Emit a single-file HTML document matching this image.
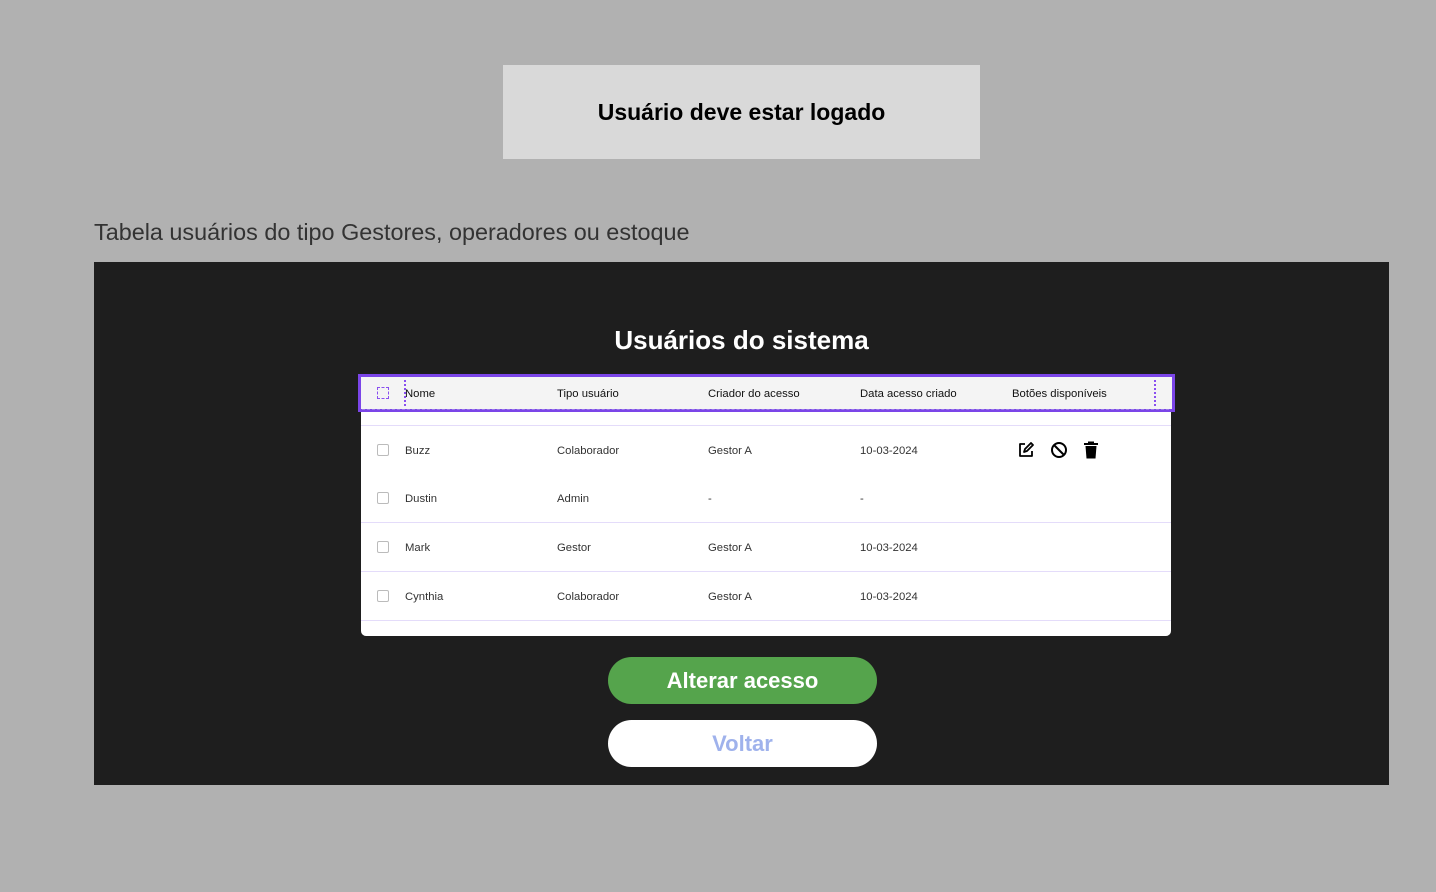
<!DOCTYPE html>
<html><head><meta charset="utf-8"><style>
body{margin:0;width:1436px;height:892px;background:#b1b1b1;position:relative;overflow:hidden;font-family:"Liberation Sans",sans-serif}
.abs{position:absolute}
.t{font-size:11.3px;color:#333;position:absolute;line-height:14px}
.h{font-size:11.3px;color:#111;position:absolute;line-height:14px}
.cb{position:absolute;left:377px;width:10px;height:10px;border:1px solid #bbb;border-radius:2px;background:#fff}
.sep{position:absolute;left:361px;width:810px;height:1px;background:#e4dcfa}
</style></head><body>
<div class="abs" style="left:503px;top:65px;width:477px;height:94px;background:#d9d9d9;display:flex;align-items:center;justify-content:center;font-weight:bold;font-size:23px;color:#000">Usuário deve estar logado</div>
<div class="abs" style="left:94px;top:219px;font-size:23.4px;color:#333">Tabela usuários do tipo Gestores, operadores ou estoque</div>
<div class="abs" style="left:94px;top:262px;width:1295px;height:523px;background:#1e1e1e"></div>
<div class="abs" style="left:94px;top:325px;width:1295px;text-align:center;color:#fff;font-weight:bold;font-size:26px">Usuários do sistema</div>
<div class="abs" style="left:361px;top:376px;width:810px;height:260px;background:#fff;border-radius:5px"></div>
<div class="abs" style="left:358px;top:374px;width:811px;height:32px;border:3px solid #7b45e8;background:#f4f4f4"></div>
<div class="abs" style="left:362px;top:409px;width:807px;border-top:1px dashed #9a7be6"></div>
<div class="abs" style="left:377px;top:387px;width:10px;height:10px;border:1.5px dashed #8a4ff0"></div>
<div class="abs" style="left:404px;top:380px;height:26px;border-left:2px dotted #8a4ff0"></div>
<div class="abs" style="left:1154px;top:380px;height:26px;border-left:2px dotted #8a4ff0"></div>
<div class="h" style="left:405px;top:387px">Nome</div>
<div class="h" style="left:557px;top:387px">Tipo usuário</div>
<div class="h" style="left:708px;top:387px">Criador do acesso</div>
<div class="h" style="left:860px;top:387px">Data acesso criado</div>
<div class="h" style="left:1012px;top:387px">Botões disponíveis</div>
<div class="sep" style="top:425px"></div>
<div class="sep" style="top:522px"></div>
<div class="sep" style="top:571px"></div>
<div class="sep" style="top:620px"></div>
<div class="cb" style="top:444px"></div><div class="t" style="left:405px;top:444px">Buzz</div><div class="t" style="left:557px;top:444px">Colaborador</div><div class="t" style="left:708px;top:444px">Gestor A</div><div class="t" style="left:860px;top:444px">10-03-2024</div>
<div class="cb" style="top:492px"></div><div class="t" style="left:405px;top:492px">Dustin</div><div class="t" style="left:557px;top:492px">Admin</div><div class="t" style="left:708px;top:492px">-</div><div class="t" style="left:860px;top:492px">-</div>
<div class="cb" style="top:541px"></div><div class="t" style="left:405px;top:541px">Mark</div><div class="t" style="left:557px;top:541px">Gestor</div><div class="t" style="left:708px;top:541px">Gestor A</div><div class="t" style="left:860px;top:541px">10-03-2024</div>
<div class="cb" style="top:590px"></div><div class="t" style="left:405px;top:590px">Cynthia</div><div class="t" style="left:557px;top:590px">Colaborador</div><div class="t" style="left:708px;top:590px">Gestor A</div><div class="t" style="left:860px;top:590px">10-03-2024</div>
<svg class="abs" style="left:1017px;top:441px" width="18" height="18" viewBox="0 0 18 18" fill="none" stroke="#000" stroke-width="1.8" stroke-linejoin="round"><path d="M8 3H3v12h12v-5"/><path d="M7 11l1-3 6-6 2 2-6 6z"/></svg>
<svg class="abs" style="left:1050px;top:441px" width="18" height="18" viewBox="0 0 18 18" fill="none" stroke="#000" stroke-width="2"><circle cx="9" cy="9" r="7"/><path d="M4 4l10 10"/></svg>
<svg class="abs" style="left:1083px;top:441px" width="16" height="18" viewBox="0 0 16 18" fill="#000"><rect x="1" y="2" width="14" height="2"/><rect x="5" y="0.5" width="6" height="2"/><path d="M2.5 5h11l-1 12.5h-9z"/></svg>
<div class="abs" style="left:608px;top:657px;width:269px;height:47px;border-radius:24px;background:#55a44c;color:#fff;font-weight:bold;font-size:22px;display:flex;align-items:center;justify-content:center">Alterar acesso</div>
<div class="abs" style="left:608px;top:720px;width:269px;height:47px;border-radius:24px;background:#fff;color:#9fb2ec;font-weight:bold;font-size:22px;display:flex;align-items:center;justify-content:center">Voltar</div>
</body></html>
